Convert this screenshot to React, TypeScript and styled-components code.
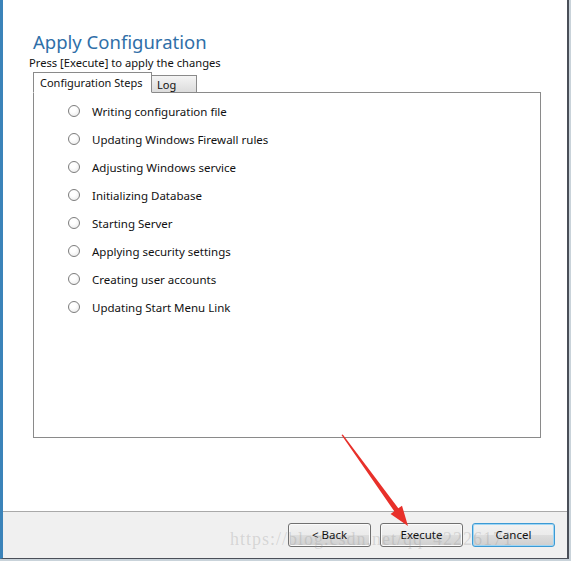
import React from 'react';
import styled, { createGlobalStyle } from 'styled-components';

const GlobalStyle = createGlobalStyle`
  html, body {
    margin: 0;
    padding: 0;
    background: #c9ced6;
  }
  body {
    font-family: "Noto Sans", "Open Sans", Arial, sans-serif;
  }
`;

// page and window frame
const Screen = styled.div`
  position: relative;
  width: 571px;
  height: 561px;
  overflow: hidden;
  background: #c9d3da;
`;

const Dialog = styled.div`
  width: 564px;
  height: 558px;
  display: flex;
  flex-direction: column;
  background: #ffffff;
  border-left: 3px solid #3b83b9;
  border-right: 2px solid #4a4f58;
  border-bottom: 1px solid #4a4f58;
`;

const Body = styled.div`
  flex: 1;
  display: flex;
  flex-direction: column;
  padding: 29px 22px 0 26px;
`;

const Title = styled.h1`
  margin: 0 0 0 4px;
  font-size: 18.5px;
  line-height: 26px;
  font-weight: 400;
  color: #2f6fa8;
`;

const Subtitle = styled.div`
  font-size: 11.2px;
  line-height: 15px;
  color: #111;
  white-space: nowrap;
`;

const Tabs = styled.div`
  display: flex;
  align-items: flex-end;
  height: 22px;
  margin-left: 4px;
`;

const Tab = styled.div<{ active?: boolean }>`
  height: ${p => (p.active ? '21px' : '17px')};
  padding: 0 ${p => (p.active ? '6px' : '5px')};
  box-sizing: border-box;
  font-size: 11px;
  white-space: nowrap;
  line-height: ${p => (p.active ? '19px' : '18px')};
  color: #111;
  border: 1px solid #8a8a8a;
  border-bottom: ${p => (p.active ? '1px solid #fff' : 'none')};
  background: ${p => (p.active ? '#fff' : 'linear-gradient(#f4f4f4, #dcdcdc)')};
  border-left: ${p => (p.active ? '1px solid #8a8a8a' : 'none')};
  margin-bottom: ${p => (p.active ? '-1px' : '0')};
  width: ${p => (p.active ? '119px' : '45px')};
  overflow: hidden;
  position: relative;
`;

const Panel = styled.div`
  margin-left: 4px;
  width: 508px;
  height: 346px;
  border: 1px solid #8a8a8a;
  padding: 9px 0 0 34px;
  box-sizing: border-box;
  display: flex;
  flex-direction: column;
  gap: 10px;
`;

const Step = styled.div`
  display: flex;
  align-items: center;
  height: 18px;
  font-size: 11.5px;
  color: #111;
`;

const Radio = styled.span`
  width: 10px;
  height: 10px;
  border-radius: 50%;
  border: 1px solid #7d7d7d;
  background: radial-gradient(circle at 40% 35%, #ffffff 30%, #e6e6e6 100%);
  margin-right: 12px;
  flex-shrink: 0;
`;

// footer with buttons
const Footer = styled.div`
  height: 47px;
  background: #f0f0f0;
  border-top: 1px solid #a9a9a9;
  display: flex;
  align-items: center;
  justify-content: flex-end;
  gap: 9px;
  padding-right: 12px;
  padding-bottom: 1px;
  box-sizing: border-box;
`;

const Button = styled.button<{ focused?: boolean }>`
  width: 83px;
  height: 24px;
  font-family: inherit;
  font-size: 11.5px;
  color: #111;
  border-radius: 3px;
  border: 1px solid ${p => (p.focused ? '#3c9ad4' : '#707070')};
  background: linear-gradient(#f2f2f2 0%, #ebebeb 50%, #dddddd 51%, #cfcfcf 100%);
  box-shadow: ${p => (p.focused ? 'inset 0 0 0 1px #9fd6f5' : 'inset 0 0 0 1px #fbfbfb')};
  padding: 0;
`;

const Watermark = styled.div`
  position: absolute;
  left: 230px;
  top: 529px;
  font-family: "Liberation Serif", "DejaVu Serif", serif;
  font-size: 18px;
  letter-spacing: 1px;
  color: rgba(150, 150, 150, 0.3);
  pointer-events: none;
  white-space: nowrap;
`;

const ArrowLayer = styled.svg`
  position: absolute;
  left: 0;
  top: 0;
  pointer-events: none;
`;

const steps = [
  'Writing configuration file',
  'Updating Windows Firewall rules',
  'Adjusting Windows service',
  'Initializing Database',
  'Starting Server',
  'Applying security settings',
  'Creating user accounts',
  'Updating Start Menu Link',
];

const App: React.FC = () => (
  <Screen>
    <GlobalStyle />
    <Dialog>
      <Body>
        <Title>Apply Configuration</Title>
        <Subtitle>Press [Execute] to apply the changes</Subtitle>
        <Tabs>
          <Tab active>Configuration Steps</Tab>
          <Tab>Log</Tab>
        </Tabs>
        <Panel>
          {steps.map(s => (
            <Step key={s}>
              <Radio />
              {s}
            </Step>
          ))}
        </Panel>
      </Body>
      <Footer>
        <Button>&lt; Back</Button>
        <Button>Execute</Button>
        <Button focused>Cancel</Button>
      </Footer>
    </Dialog>
    <Watermark>https://blog.csdn.net/qq_42226171</Watermark>
    <ArrowLayer width="571" height="561">
      <polygon
        fill="#e8302a"
        points="341.5,435 342.8,434.5 398.3,508.3 402,505.7 408,526 390.6,513.9 394.3,511.3"
      />
    </ArrowLayer>
  </Screen>
);

export default App;
